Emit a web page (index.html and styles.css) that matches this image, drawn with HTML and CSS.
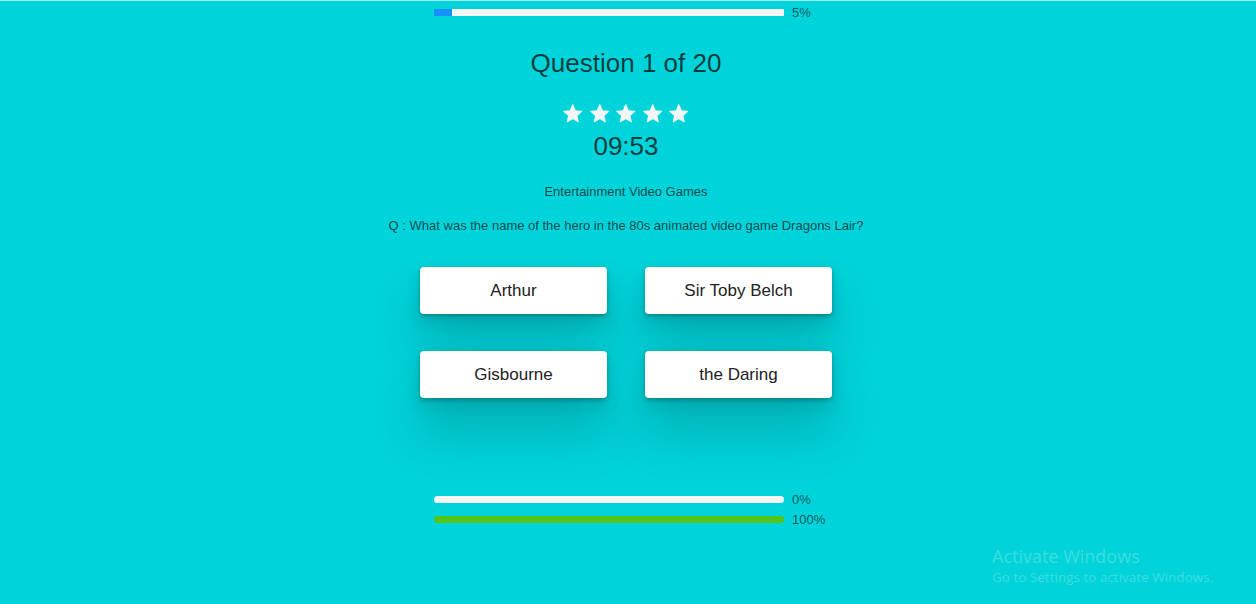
FILE: index.html
```html
<!DOCTYPE html>
<html>
<head>
<meta charset="utf-8">
<link rel="stylesheet" href="styles.css">
</head>
<body>
<div class="page">
  <div class="bar-row top-row">
    <div class="rail square"><div class="fill blue" style="width:5%"></div></div>
    <span class="pct">5%</span>
  </div>
  <h1 class="title">Question 1 of 20</h1>
  <div class="stars">
    <svg viewBox="0 0 24 24" class="star"><path d="M12 17.27L18.18 21l-1.64-7.03L22 9.24l-7.19-.61L12 2 9.19 8.63 2 9.24l5.46 4.73L5.82 21z"/></svg>
    <svg viewBox="0 0 24 24" class="star"><path d="M12 17.27L18.18 21l-1.64-7.03L22 9.24l-7.19-.61L12 2 9.19 8.63 2 9.24l5.46 4.73L5.82 21z"/></svg>
    <svg viewBox="0 0 24 24" class="star"><path d="M12 17.27L18.18 21l-1.64-7.03L22 9.24l-7.19-.61L12 2 9.19 8.63 2 9.24l5.46 4.73L5.82 21z"/></svg>
    <svg viewBox="0 0 24 24" class="star"><path d="M12 17.27L18.18 21l-1.64-7.03L22 9.24l-7.19-.61L12 2 9.19 8.63 2 9.24l5.46 4.73L5.82 21z"/></svg>
    <svg viewBox="0 0 24 24" class="star"><path d="M12 17.27L18.18 21l-1.64-7.03L22 9.24l-7.19-.61L12 2 9.19 8.63 2 9.24l5.46 4.73L5.82 21z"/></svg>
  </div>
  <div class="timer">09:53</div>
  <p class="category">Entertainment Video Games</p>
  <p class="question">Q : What was the name of the hero in the 80s animated video game Dragons Lair?</p>
  <div class="answers">
    <button class="answer">Arthur</button>
    <button class="answer">Sir Toby Belch</button>
    <button class="answer">Gisbourne</button>
    <button class="answer">the Daring</button>
  </div>
  <div class="bottom-bars">
    <div class="bar-row">
      <div class="rail round"><div class="fill" style="width:0%"></div></div>
      <span class="pct">0%</span>
    </div>
    <div class="bar-row">
      <div class="rail round"><div class="fill green" style="width:100%"></div></div>
      <span class="pct">100%</span>
    </div>
  </div>
</div>
<div class="watermark">
  <div class="wm-title">Activate Windows</div>
  <div class="wm-sub">Go to Settings to activate Windows.</div>
</div>
</body>
</html>
```
FILE: styles.css
```css
html, body {
  margin: 0;
  padding: 0;
}
body {
  background: #00d3d9;
  font-family: "Liberation Sans", Arial, sans-serif;
  height: 604px;
  overflow: hidden;
  border-top: 1px solid #9eecef;
  box-sizing: border-box;
  position: relative;
}
.page {
  display: flex;
  flex-direction: column;
  align-items: center;
  padding-right: 4px;
}
.bar-row {
  width: 384px;
  height: 14px;
  display: flex;
  align-items: center;
  gap: 8px;
}
.top-row {
  margin-top: 4.5px;
}
.rail {
  width: 350px;
  height: 7px;
  background: #f5f5f5;
  overflow: hidden;
  flex: none;
}
.rail.round {
  border-radius: 4px;
}
.fill {
  height: 100%;
}
.fill.blue {
  background: #1890ff;
}
.fill.green {
  background: #52c41a;
}
.pct {
  font-size: 13px;
  line-height: 14px;
  color: rgba(0, 0, 0, 0.62);
  white-space: nowrap;
}
.title {
  margin: 28.5px 0 0;
  font-size: 26px;
  font-weight: normal;
  line-height: 30px;
  color: rgba(0, 0, 0, 0.72);
}
.stars {
  margin-top: 24.5px;
  height: 20px;
  display: flex;
  gap: 5px;
}
.star {
  width: 21.5px;
  height: 21.5px;
  fill: #f2f6f6;
  stroke: #f2f6f6;
  stroke-width: 1.2;
  stroke-linejoin: round;
}
.timer {
  margin-top: 8.5px;
  font-size: 26px;
  line-height: 30px;
  color: rgba(0, 0, 0, 0.72);
}
.category {
  margin: 22.5px 0 0;
  font-size: 13px;
  line-height: 15px;
  color: rgba(0, 0, 0, 0.68);
}
.question {
  margin: 19px 0 0;
  font-size: 13px;
  line-height: 15px;
  color: rgba(0, 0, 0, 0.68);
}
.answers {
  margin-top: 34.5px;
  display: grid;
  grid-template-columns: 187px 187px;
  grid-auto-rows: 47px;
  column-gap: 38px;
  row-gap: 37px;
}
.answer {
  background: #fff;
  border: none;
  border-radius: 4px;
  font-family: "Liberation Sans", Arial, sans-serif;
  font-size: 17px;
  color: #222;
  padding: 0;
  box-shadow: 0 2px 4px rgba(0, 0, 0, 0.25), 0 8px 16px rgba(0, 40, 50, 0.14), 0 34px 48px rgba(0, 50, 60, 0.22);
}
.bottom-bars {
  margin-top: 94.5px;
  display: flex;
  flex-direction: column;
  gap: 6px;
}
.watermark {
  position: absolute;
  left: 992px;
  top: 543px;
  color: rgba(255, 255, 255, 0.25);
  font-family: "Open Sans", "Noto Sans", sans-serif;
}
.wm-title {
  font-size: 18px;
  line-height: 24px;
}
.wm-sub {
  font-size: 13.5px;
  line-height: 18px;
}
```
